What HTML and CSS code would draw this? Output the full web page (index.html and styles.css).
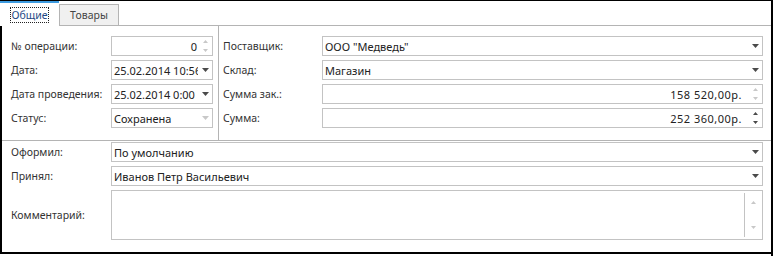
FILE: index.html
```html
<!DOCTYPE html>
<html lang="ru">
<head>
  <meta charset="UTF-8" />
  <title>Документ поступления</title>
  <link rel="stylesheet" href="styles.css">
</head>
<body>
  <div class="window">
    <div class="tab-strip">
      <div class="tab active"><span class="tab-caption">Общие</span></div>
      <div class="tab">Товары</div>
      <div class="tab-fill"></div>
    </div>

    <div class="panel">
      <div class="top-section">
        <div class="col col-left">
          <div class="row">
            <label>№ операции:</label>
            <div class="field">
              <span class="value num">0</span>
              <span class="btn spin off"><svg width="7" height="18" viewBox="0 0 7 18"><path d="M3.5 3L6 6H1z M1 12h5L3.5 15z"/></svg></span>
            </div>
          </div>
          <div class="row">
            <label>Дата:</label>
            <div class="field">
              <span class="value">25.02.2014 10:56</span>
              <span class="btn"><svg width="7" height="4" viewBox="0 0 7 4"><path d="M0 0h7L3.5 4z"/></svg></span>
            </div>
          </div>
          <div class="row">
            <label>Дата проведения:</label>
            <div class="field">
              <span class="value">25.02.2014 0:00</span>
              <span class="btn"><svg width="7" height="4" viewBox="0 0 7 4"><path d="M0 0h7L3.5 4z"/></svg></span>
            </div>
          </div>
          <div class="row">
            <label>Статус:</label>
            <div class="field">
              <span class="value">Сохранена</span>
              <span class="btn off"><svg width="7" height="4" viewBox="0 0 7 4"><path d="M0 0h7L3.5 4z"/></svg></span>
            </div>
          </div>
        </div>

        <div class="col col-right">
          <div class="row">
            <label>Поставщик:</label>
            <div class="field">
              <span class="value">ООО "Медведь"</span>
              <span class="btn"><svg width="7" height="4" viewBox="0 0 7 4"><path d="M0 0h7L3.5 4z"/></svg></span>
            </div>
          </div>
          <div class="row">
            <label>Склад:</label>
            <div class="field">
              <span class="value">Магазин</span>
              <span class="btn"><svg width="7" height="4" viewBox="0 0 7 4"><path d="M0 0h7L3.5 4z"/></svg></span>
            </div>
          </div>
          <div class="row">
            <label>Сумма зак.:</label>
            <div class="field">
              <span class="value num money">158 520,00р.</span>
              <span class="btn spin off"><svg width="7" height="18" viewBox="0 0 7 18"><path d="M3.5 3L6 6H1z M1 12h5L3.5 15z"/></svg></span>
            </div>
          </div>
          <div class="row">
            <label>Сумма:</label>
            <div class="field">
              <span class="value num money">252 360,00р.</span>
              <span class="btn spin"><svg width="7" height="18" viewBox="0 0 7 18"><path d="M3.5 3L6 6H1z M1 12h5L3.5 15z"/></svg></span>
            </div>
          </div>
        </div>
      </div>

      <div class="bottom-section">
        <div class="row">
          <label>Оформил:</label>
          <div class="field">
            <span class="value">По умолчанию</span>
            <span class="btn"><svg width="7" height="4" viewBox="0 0 7 4"><path d="M0 0h7L3.5 4z"/></svg></span>
          </div>
        </div>
        <div class="row">
          <label>Принял:</label>
          <div class="field">
            <span class="value">Иванов Петр Васильевич</span>
            <span class="btn"><svg width="7" height="4" viewBox="0 0 7 4"><path d="M0 0h7L3.5 4z"/></svg></span>
          </div>
        </div>
        <div class="row memo-row">
          <label>Комментарий:</label>
          <div class="field memo">
            <span class="value"></span>
            <span class="scrollbar">
              <svg width="7" height="4" viewBox="0 0 7 4"><path d="M1 4h5L3.5 1z"/></svg>
              <svg width="7" height="4" viewBox="0 0 7 4"><path d="M1 0h5L3.5 3z"/></svg>
            </span>
          </div>
        </div>
      </div>
    </div>
  </div>
</body>
</html>
```

FILE: styles.css
```css
body {
  margin: 0;
  background-color: #fff;
  font-family: "Noto Sans", "Open Sans", sans-serif;
  font-size: 10.5px;
  color: #333;
}
.window {
  width: 773px;
  height: 256px;
  box-sizing: border-box;
  border-top: 1px solid #000;
  border-right: 2px solid #000;
}
.tab-strip {
  display: flex;
  align-items: flex-end;
  height: 25px;
}
.tab {
  box-sizing: border-box;
  width: 60px;
  height: 22px;
  border: 1px solid #b4b4b4;
  background-color: #f0f0f0;
  color: #444;
  display: flex;
  align-items: center;
  justify-content: center;
}
.tab.active {
  width: 59px;
  height: 25px;
  border: none;
  border-top: 2px solid #3d9be0;
  background-color: #fff;
  color: #1f4a86;
}
.tab-caption {
  outline: 1px dotted #222;
  padding: 0 1px;
  line-height: 14px;
}
.tab-fill {
  flex: 1;
  align-self: stretch;
  border-bottom: 1px solid #b4b4b4;
}
.panel {
  height: 228px;
  box-sizing: border-box;
  border-left: 2px solid #000;
  border-bottom: 2px solid #000;
}
.top-section {
  display: flex;
  height: 115px;
  border-bottom: 1px solid #b4b4b4;
  box-sizing: border-box;
}
.col {
  box-sizing: border-box;
  padding-top: 10px;
}
.col-left {
  width: 217px;
  padding-left: 9px;
  padding-right: 5px;
  border-right: 1px solid #b4b4b4;
}
.col-right {
  flex: 1;
  padding-left: 4px;
  padding-right: 8px;
}
.col-right label {
  width: 99px;
}
.row {
  display: flex;
  align-items: center;
  height: 20px;
  margin-bottom: 4px;
}
label {
  width: 100px;
  flex-shrink: 0;
}
.field {
  flex: 1;
  display: flex;
  align-items: center;
  box-sizing: border-box;
  height: 20px;
  border: 1px solid #c3c3c3;
  background-color: #fff;
  color: #222;
  font-size: 11px;
  overflow: hidden;
}
.value {
  flex: 1;
  padding-left: 2px;
  white-space: nowrap;
  overflow: hidden;
}
.value.num {
  text-align: right;
  padding-right: 1px;
}
.value.money {
  padding-right: 6px;
  letter-spacing: 0.5px;
}
.btn {
  width: 14px;
  flex-shrink: 0;
  display: flex;
  align-items: center;
  justify-content: center;
  fill: #4a4a4a;
}
.btn.off {
  fill: #c8c8c8;
}
.bottom-section {
  padding: 1px 8px 0 9px;
}
.memo-row {
  height: 50px;
}
.field.memo {
  height: 50px;
  align-items: stretch;
}
.scrollbar {
  width: 17px;
  margin: 2px 0;
  border-left: 1px solid #c3c3c3;
  display: flex;
  flex-direction: column;
  align-items: center;
  justify-content: space-between;
  padding: 7px 0;
  fill: #c8c8c8;
}
```
